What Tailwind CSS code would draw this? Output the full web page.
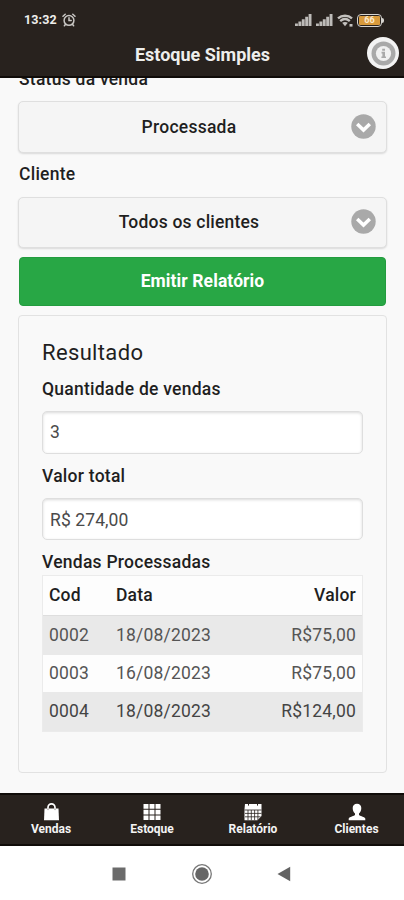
<!DOCTYPE html>
<html lang="pt-BR">
<head>
<meta charset="utf-8">
<meta name="viewport" content="width=device-width, initial-scale=1">
<title>Estoque Simples</title>
<script src="https://cdn.jsdelivr.net/npm/@tailwindcss/browser@4"></script>
</head>
<body class="w-[404px] h-[900px] overflow-hidden flex flex-col bg-white font-[Roboto,sans-serif] text-[#1f1f1f]">

<header class="relative z-10 h-[78px] shrink-0 bg-[#28221e] border-b-2 border-[#100c09] text-[#eeeeec] flex flex-col">
  <div class="h-10 flex items-center pl-[24px] pr-[20px]">
    <span class="text-[12.5px] leading-none font-bold tracking-[0.1px] w-[38px]">13:32</span>
    <svg class="w-[14px] h-[14px]" viewBox="0 0 14 14" fill="none" stroke="#c9c7c4" stroke-width="1.5" stroke-linecap="round"><circle cx="7" cy="7.4" r="4.9"/><path d="M1 3.2 3.2 1.2M13 3.2 10.8 1.2M3.4 11.5 2.4 12.8M10.6 11.5l1 1.3M7 4.8v2.8h2.2"/></svg>
    <div class="ml-auto flex items-center">
      <svg class="w-[17px] h-[12px]" viewBox="0 0 17 12" fill="#bdbbb8"><path d="M0 9.5h2.9V12H0zM3.4 7.5h2.9V12H3.4zM6.8 5.2h2.9V12H6.8zM10.2 2.8h2.9V12h-2.9zM13.6 0h2.9v12h-2.9z"/></svg>
      <svg class="w-[17px] h-[12px] ml-[4px]" viewBox="0 0 17 12" fill="#bdbbb8"><path d="M0 9.5h2.9V12H0zM3.4 7.5h2.9V12H3.4zM6.8 5.2h2.9V12H6.8zM10.2 2.8h2.9V12h-2.9zM13.6 0h2.9v12h-2.9z"/></svg>
      <svg class="w-[17px] h-[13px] ml-[4px]" viewBox="0 0 17 13" fill="none" stroke="#c4c2bf" stroke-width="2.4"><path d="M1 4.4C5 .8 11 .8 15 4.4M3.2 7.1c2.900-2.500 6.700-2.500 9.600 0"/><path d="M5.200 8.800c1.600-1.200 4-1.200 5.600 0L8 12.200z" fill="#c4c2bf" stroke="none"/><path d="M12.500 10h3v2.600h-3z" fill="#c4c2bf" stroke="none"/></svg>
      <div class="ml-[3px] w-[25px] h-[13px] rounded-[4px] border-[1.5px] border-[#d6d4d0] p-[1px] flex"><span class="w-full rounded-[1px] bg-[#d89a3c] text-[9px] leading-[9px] font-bold text-[#fbe9cd] text-center">66</span></div>
      <span class="w-[2px] h-[5px] rounded-r bg-[#d6d4d0]"></span>
    </div>
  </div>
  <h1 class="h-[30px] flex items-center justify-center pl-[1px] text-[18px] leading-none font-bold">Estoque Simples</h1>
  <button class="absolute left-[367px] top-[37px] w-8 h-8 rounded-full bg-[#f3f3f3] flex items-center justify-center" aria-label="Info">
    <svg class="w-[25px] h-[25px]" viewBox="0 0 25 25"><circle cx="12.5" cy="12.5" r="12" fill="#a9a9a9"/><circle cx="12.5" cy="12.5" r="7.6" fill="#f1f1f1"/><path d="M11.2 7.8h2.8v2h-2.8zM10.5 10.8H14v4.6h1v1.7h-4.6v-1.7h1v-2.9h-.9z" fill="#a9a9a9"/></svg>
  </button>
</header>

<main class="h-[715px] shrink-0 bg-[#f9f9f9] pl-[18px] pr-[17px] overflow-hidden flex flex-col">
  <label class="-mt-[9px] h-[20px] leading-[20px] shrink-0 pl-[1px] text-[17.5px] font-medium tracking-[0.25px]">Status da venda</label>
  <button class="mt-[12px] h-[52px] shrink-0 rounded-[5px] border-[1.5px] border-[#dfdfdf] bg-[#f5f5f5] shadow-[0_1px_2px_rgba(0,0,0,0.13)] flex items-center justify-center relative text-[17.5px] font-medium tracking-[0.25px] pr-[27px]">
    Processada
    <svg class="absolute right-[10px] top-[12px] w-[25px] h-[25px]" viewBox="0 0 25 25"><circle cx="12.5" cy="12.5" r="12.2" fill="#a9a9a9"/><path d="m6.2 10 6.3 6 6.3-6" fill="none" stroke="#fff" stroke-width="3.5"/></svg>
  </button>
  <label class="mt-[11px] h-[20px] leading-[20px] shrink-0 pl-[1px] text-[17.5px] font-medium tracking-[0.25px]">Cliente</label>
  <button class="mt-[13px] h-[51px] shrink-0 rounded-[5px] border-[1.5px] border-[#dfdfdf] bg-[#f5f5f5] shadow-[0_1px_2px_rgba(0,0,0,0.13)] flex items-center justify-center relative text-[17.5px] font-medium tracking-[0.2px] pr-[27px]">
    Todos os clientes
    <svg class="absolute right-[10px] top-[11px] w-[25px] h-[25px]" viewBox="0 0 25 25"><circle cx="12.5" cy="12.5" r="12.2" fill="#a9a9a9"/><path d="m6.2 10 6.3 6 6.3-6" fill="none" stroke="#fff" stroke-width="3.5"/></svg>
  </button>
  <button class="mt-[9px] mx-[1px] h-[49px] shrink-0 rounded-[4px] bg-[#28a745] border border-[#239c3f] text-white text-[17.5px] font-bold tracking-[0.1px]">Emitir Relatório</button>

  <section class="mt-[9px] h-[458px] shrink-0 rounded-[4px] border-[1.5px] border-[#e2e2e2] px-[23px] flex flex-col">
    <h2 class="mt-[24px] h-[26px] leading-[26px] text-[22px] tracking-[0.35px]">Resultado</h2>
    <label class="mt-[13px] h-[20px] leading-[20px] text-[17.5px] font-medium tracking-[0.25px]">Quantidade de vendas</label>
    <div class="mt-[12px] h-[43px] shrink-0 rounded-[5px] border-[1.5px] border-[#dedede] bg-white shadow-[inset_0_1px_3px_rgba(0,0,0,0.15)] px-[7px] flex items-center text-[17.5px] text-[#4a4a4a]">3</div>
    <label class="mt-[12px] h-[20px] leading-[20px] text-[17.5px] font-medium tracking-[0.25px]">Valor total</label>
    <div class="mt-[12px] h-[42px] shrink-0 rounded-[5px] border-[1.5px] border-[#dedede] bg-white shadow-[inset_0_1px_3px_rgba(0,0,0,0.15)] px-[7px] pt-[2px] flex items-center text-[17.5px] text-[#4a4a4a] tracking-[0.1px]">R$ 274,00</div>
    <h3 class="mt-[12px] h-[20px] leading-[20px] text-[17.5px] font-medium tracking-[0.25px]">Vendas Processadas</h3>
    <div class="mt-[3px] border border-[#ebebeb] bg-[#fdfdfd] text-[17.5px] text-[#555] tracking-[0.2px]">
      <div class="h-[39px] grid grid-cols-[67px_1fr_auto] items-center px-[6px] font-medium text-[#1f1f1f]"><span>Cod</span><span>Data</span><span>Valor</span></div>
      <div class="h-[40px] grid grid-cols-[67px_1fr_auto] items-center px-[6px] bg-[#e9e9e9] border-t border-[#dedede]"><span>0002</span><span>18/08/2023</span><span>R$75,00</span></div>
      <div class="h-[37px] grid grid-cols-[67px_1fr_auto] items-center px-[6px]"><span>0003</span><span>16/08/2023</span><span>R$75,00</span></div>
      <div class="h-[39px] grid grid-cols-[67px_1fr_auto] items-center px-[6px] bg-[#e9e9e9] text-[#444]"><span>0004</span><span>18/08/2023</span><span>R$124,00</span></div>
    </div>
  </section>
</main>

<nav class="h-[53px] shrink-0 bg-[#28221e] border-y-2 border-[#100c09] grid grid-cols-4 text-[#f4f4f4] text-[12px] leading-[14px] font-bold">
  <a class="flex flex-col items-center pt-[8px] pl-[1px]">
    <svg class="w-[17px] h-[18px]" viewBox="0 0 17 18"><path d="M1.5 5.500h14L16 17.200H1z" fill="#fff"/><path d="M5 8V4.400a3.500 3.500 0 0 1 7 0V8" fill="none" stroke="#fff" stroke-width="1.700"/><path d="M5 5.500v1.600M12 5.500v1.600" stroke="#8a8683" stroke-width="1"/></svg>
    <span class="mt-[1px]">Vendas</span>
  </a>
  <a class="flex flex-col items-center pt-[8px] pl-[1px]">
    <svg class="w-[18px] h-[18px]" viewBox="0 0 18 18" fill="#fff"><path d="M.5 1h5v4.700h-5zM6.500 1h5v4.700h-5zM12.500 1h5v4.700h-5zM.5 6.700h5v4.700h-5zM6.500 6.700h5v4.700h-5zM12.500 6.700h5v4.700h-5zM.5 12.400h5v4.700h-5zM6.500 12.400h5v4.700h-5zM12.500 12.400h5v4.700h-5z"/></svg>
    <span class="mt-[1px]">Estoque</span>
  </a>
  <a class="flex flex-col items-center pt-[8px] pl-[1px]">
    <svg class="w-[18px] h-[18px]" viewBox="0 0 18 18"><path d="M1 1h16.500v12l-4 4.200H.5V6z" fill="#fff"/><path d="M.5 7h17M1 10.400h16.500M1 13.800h15.500M4 7v10.200M7.300 7v10.200M10.600 7v10.200M13.900 7v10.200" stroke="#28221e" stroke-width=".8"/><path d="M4.500 1v1.600M13.500 1v1.600" stroke="#28221e" stroke-width="1"/></svg>
    <span class="mt-[1px]">Relatório</span>
  </a>
  <a class="flex flex-col items-center pt-[8px] pl-[6px]">
    <svg class="w-[18px] h-[18px]" viewBox="0 0 18 18" fill="#fff"><path d="M9 .8c2.700 0 4.300 1.700 4.300 4.200 0 2.200-.9 4.500-2.300 5.500v1.500c.4.900 5.800 1.800 6.300 3.500v1.700H.7v-1.700c.5-1.700 5.900-2.600 6.300-3.500v-1.500C5.600 9.500 4.700 7.200 4.700 5 4.700 2.500 6.300.8 9 .8z"/></svg>
    <span class="mt-[1px]">Clientes</span>
  </a>
</nav>

<footer class="flex-1 bg-white flex items-center pl-[112px] pt-[1px]">
  <svg class="w-[14px] h-[14px]" viewBox="0 0 14 14"><path d="M.5.5h13v13H.5z" fill="#6b6b6b"/></svg>
  <svg class="w-[22px] h-[22px] ml-[65px]" viewBox="0 0 22 22"><circle cx="11" cy="11" r="9.300" fill="none" stroke="#777" stroke-width="1.300"/><circle cx="11" cy="11" r="6.800" fill="#666"/></svg>
  <svg class="w-[14px] h-[16px] ml-[64px]" viewBox="0 0 14 16"><path d="M.5 8 13.200.800v14.400z" fill="#636363"/></svg>
</footer>
</body>
</html>
